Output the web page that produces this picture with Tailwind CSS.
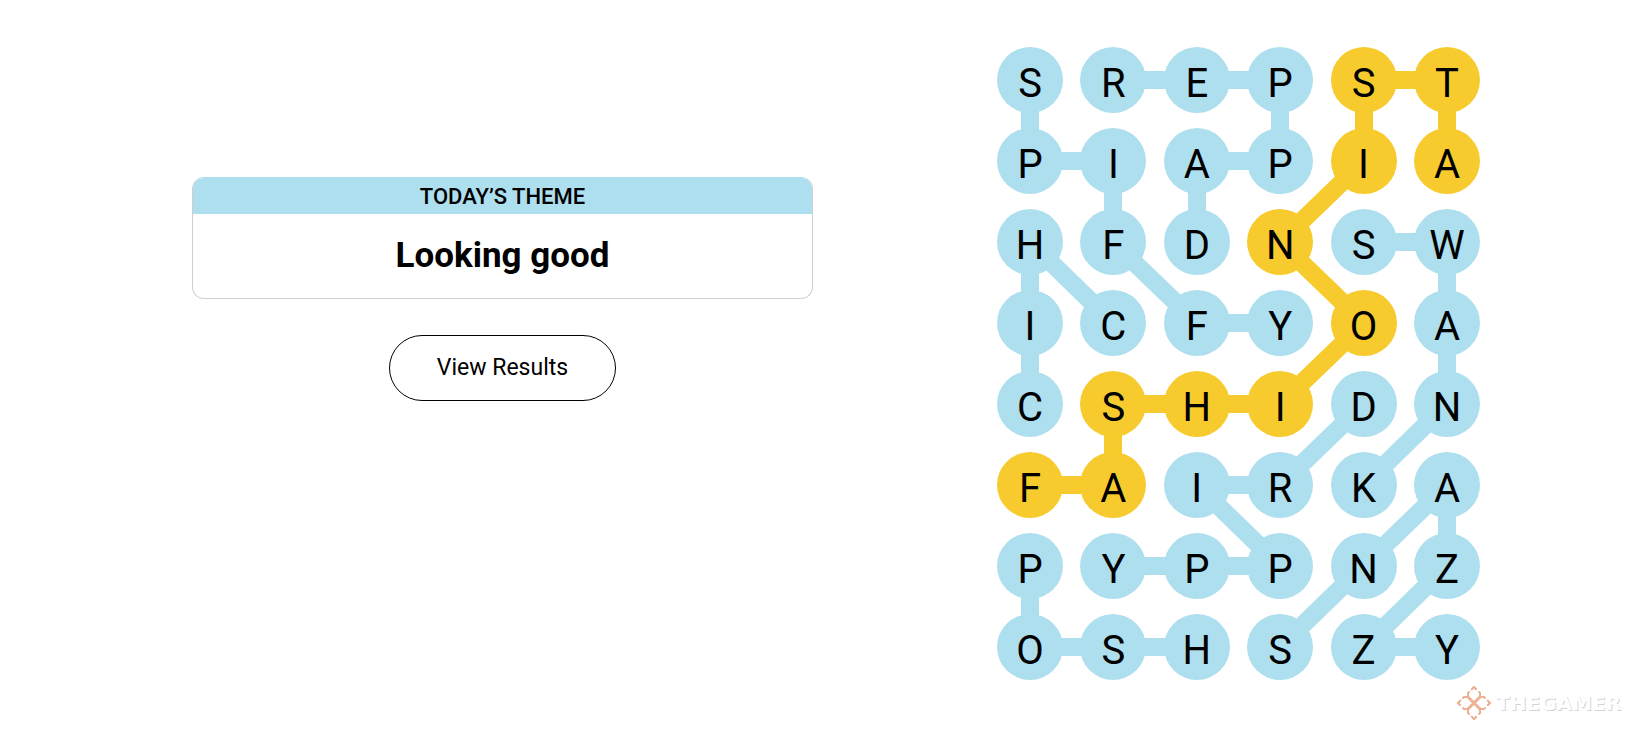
<!DOCTYPE html>
<html lang="en">
<head>
<meta charset="utf-8">
<meta name="viewport" content="width=device-width, initial-scale=1">
<title>Strands – Looking good</title>
<script src="https://cdn.jsdelivr.net/npm/@tailwindcss/browser@4"></script>
</head>
<body class="bg-white font-['Roboto',sans-serif] text-black">
<div class="flex min-h-screen flex-col justify-between">
<main class="flex items-start gap-[184px] pt-[47px] pr-[161px] pl-48">
  <section class="mt-[130px] flex flex-1 flex-col items-center gap-9">
    <div class="w-full overflow-hidden rounded-xl border border-[#cfcfcf] border-t-[#aedfee] bg-white text-center">
      <h2 class="bg-[#aedfee] pt-0.5 text-[22px] leading-[34px] font-medium">TODAY’S THEME</h2>
      <p class="py-5 text-[35px] leading-[44px] font-bold">Looking good</p>
    </div>
    <button type="button" class="rounded-full border border-black px-[47px] py-4 text-[23px] leading-8">View Results</button>
  </section>

  <section class="relative w-[483px] shrink-0" aria-label="Letter board">
    <svg class="absolute inset-0 h-full w-full" viewBox="0 0 483 633" fill="none" stroke-width="18" stroke-linejoin="round" aria-hidden="true">
      <g stroke="#aedfee">
        <path d="M33 33V114H116V195L200 276H283"/>
        <path d="M116 33H283V114H200V195"/>
        <path d="M116 276L33 195V357"/>
        <path d="M367 195H450V357L367 438"/>
        <path d="M367 357L283 438H200L283 519H116"/>
        <path d="M33 519V600H200"/>
        <path d="M283 600L450 438V519L367 600H450"/>
      </g>
      <path stroke="#f7cb2d" d="M450 114V33H367V114L283 195L367 276L283 357H116V438H33"/>
    </svg>
    <div id="board" class="relative grid grid-cols-[repeat(6,66px)] justify-between gap-y-[15px]"></div>
  </section>
</main>

<footer class="flex items-center justify-end gap-1 pr-5 pb-5">
  <svg class="size-9" viewBox="0 0 36 36" fill="none" stroke="#ecb294" stroke-width="2" stroke-linecap="round" stroke-linejoin="round" aria-hidden="true">
    <path stroke-width="3" d="M12 12L24 24M24 12L12 24"/>
    <path d="M8 12H11L12 11V8M28 12H25L24 11V8M8 24H11L12 25V28M28 24H25L24 25V28"/>
    <path d="M12 8L13 7M24 8L23 7M8 12L7 13M28 12L29 13M8 24L7 23M28 24L29 23M12 28L13 29M24 28L23 29"/>
    <g fill="#ecb294" stroke-width="1">
      <path d="M15 4L18 1L21 4L20 5L18 3L16 5Z"/>
      <path d="M15 32L18 35L21 32L20 31L18 33L16 31Z"/>
      <path d="M4 15L1 18L4 21L5 20L3 18L5 16Z"/>
      <path d="M32 15L35 18L32 21L31 20L33 18L31 16Z"/>
    </g>
  </svg>
  <span class="font-['DejaVu_Sans',sans-serif] text-xl leading-9 font-bold text-white [text-shadow:1px_1px_0px_#d4d4d8]">THEGAMER</span>
</footer>
</div>
<script>
  const rows = ["SREPST", "PIAPIA", "HFDNSW", "ICFYOA", "CSHIDN", "FAIRKA", "PYPPNZ", "OSHSZY"];
  const spangram = new Set(["0-4", "0-5", "1-4", "1-5", "2-3", "3-4", "4-1", "4-2", "4-3", "5-0", "5-1"]);
  const blue = "h-[66px] rounded-full bg-[#aedfee] pt-2 text-[40px] leading-[58px]";
  const gold = "h-[66px] rounded-full bg-[#f7cb2d] pt-2 text-[40px] leading-[58px]";
  const board = document.getElementById("board");
  rows.forEach((row, r) => [...row].forEach((letter, c) => {
    const b = document.createElement("button");
    b.type = "button";
    b.textContent = letter;
    b.className = spangram.has(r + "-" + c) ? gold : blue;
    board.append(b);
  }));
</script>
</body>
</html>
